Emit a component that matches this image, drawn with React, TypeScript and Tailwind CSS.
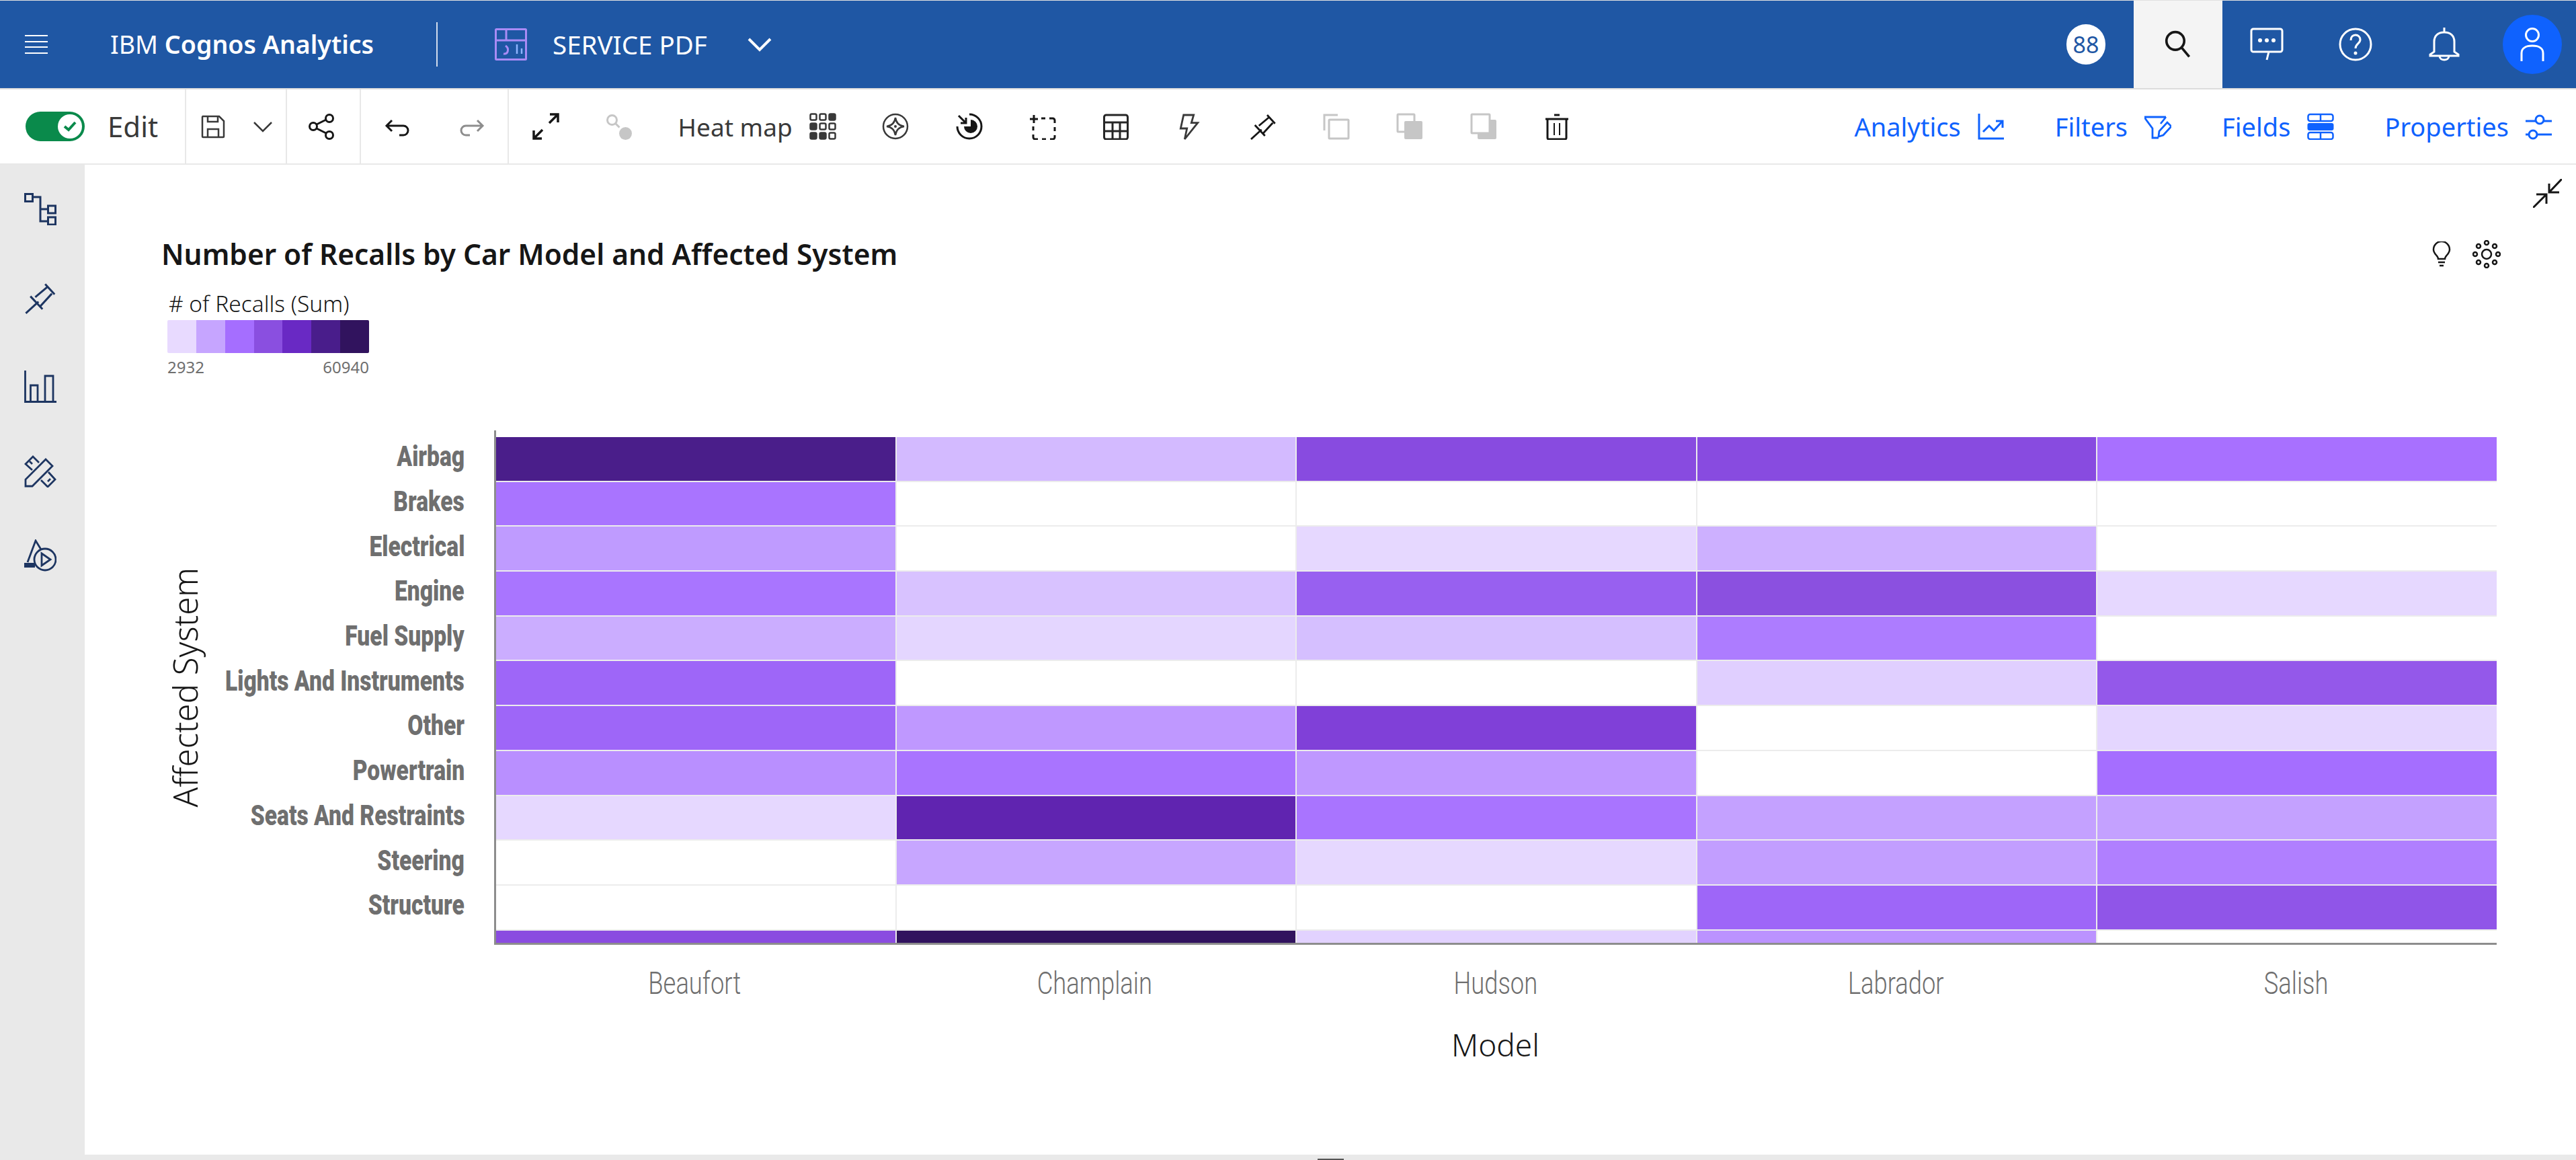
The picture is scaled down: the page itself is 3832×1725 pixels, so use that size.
import React from 'react';

const SANS = "font-['Noto_Sans','Liberation_Sans',sans-serif]";

// value rows, top to bottom: Beaufort, Champlain, Hudson, Labrador, Salish
const rows: { label: string; cells: string[] }[] = [
  { label: 'Airbag', cells: ['#4a1e8a', '#d3baff', '#884be0', '#884be0', '#a870ff'] },
  { label: 'Brakes', cells: ['#a974ff', '#ffffff', '#ffffff', '#ffffff', '#ffffff'] },
  { label: 'Electrical', cells: ['#bf9bff', '#ffffff', '#e6d8ff', '#cdb0ff', '#ffffff'] },
  { label: 'Engine', cells: ['#a975ff', '#d8c2ff', '#9860f0', '#8b50e0', '#e6d8ff'] },
  { label: 'Fuel Supply', cells: ['#cbadff', '#e4d6ff', '#d5bfff', '#ad7cff', '#ffffff'] },
  { label: 'Lights And Instruments', cells: ['#9e66f8', '#ffffff', '#ffffff', '#e0cfff', '#9458ea'] },
  { label: 'Other', cells: ['#9e66f8', '#bf98ff', '#8040d8', '#ffffff', '#e4d6ff'] },
  { label: 'Powertrain', cells: ['#b98fff', '#a974ff', '#bf98ff', '#ffffff', '#a56eff'] },
  { label: 'Seats And Restraints', cells: ['#e6d8ff', '#6024b0', '#a974ff', '#c4a1ff', '#c4a1ff'] },
  { label: 'Steering', cells: ['#ffffff', '#c7a6ff', '#e6d8ff', '#c29eff', '#b07fff'] },
  { label: 'Structure', cells: ['#ffffff', '#ffffff', '#ffffff', '#9e66f8', '#9055e8'] },
  { label: '', cells: ['#8a4ce0', '#31135e', '#e2d2ff', '#bb92ff', '#ffffff'] },
];

const models = ['Beaufort', 'Champlain', 'Hudson', 'Labrador', 'Salish'];
const legend = ['#e8daff', '#c6a5ff', '#a56eff', '#8a4fe0', '#6929c4', '#491d8b', '#31135e'];

const Icon: React.FC<{ size?: number; box?: number; sw?: number; className?: string; children: React.ReactNode }> = ({
  size = 40,
  box = 40,
  sw = 3,
  className = '',
  children,
}) => (
  <svg
    width={size}
    height={size}
    viewBox={`0 0 ${box} ${box}`}
    fill="none"
    stroke="currentColor"
    strokeWidth={sw}
    className={`shrink-0 ${className}`}
  >
    {children}
  </svg>
);

const PinPaths = () => (
  <>
    <path d="M2 39L17.7 24.7" />
    <path d="M26 3L37.7 15.7" />
    <path d="M7.7 18L22.7 34" />
    <path d="M13.7 19L29.3 6" />
    <path d="M34.3 14.7L19.3 31" />
  </>
);

const Hamburger = () => (
  <svg width="34" height="30" viewBox="0 0 34 30" fill="none" stroke="#fff" strokeWidth="2" className="shrink-0">
    <path d="M0 2h34M0 11h34M0 19h34M0 28h34" />
  </svg>
);

const ToolButton: React.FC<{ children: React.ReactNode }> = ({ children }) => (
  <div className="flex h-full w-[109.3px] shrink-0 items-center justify-center">{children}</div>
);

const TopButton: React.FC<{ active?: boolean; children: React.ReactNode }> = ({ active, children }) => (
  <div className={`flex h-full w-[132px] shrink-0 items-center justify-center ${active ? 'bg-[#f4f4f4] text-[#161616]' : 'text-white'}`}>
    {children}
  </div>
);

const TopBar = () => (
  <header className="flex h-[133px] shrink-0 items-center border-t border-b-2 border-t-[#e0e0e0] border-b-[#dcdcdc] bg-[#1f57a4] pl-[37px] text-white">
    <Hamburger />
    <div className="ml-[93px] w-[391px] text-[37.5px] leading-none whitespace-nowrap">
      IBM <span className="font-semibold">Cognos Analytics</span>
    </div>
    <div className="ml-[94px] h-[66px] w-[2px] bg-white/80" />
    <svg width="48" height="48" viewBox="0 0 48 48" fill="none" stroke="#a98bf5" strokeWidth="3" className="ml-[85px] shrink-0">
      <rect x="1.5" y="1.5" width="45" height="45" rx="1" />
      <path d="M1.5 18h45M17 1.5V18" />
      <path d="M16 26c6 4 4 13-3 12" strokeWidth="3" />
      <path d="M33 24v14M40 30v8" stroke="#8fb4ff" strokeWidth="2.5" />
    </svg>
    <div className="ml-[38px] w-[236px] text-[38.5px] leading-none whitespace-nowrap">SERVICE PDF</div>
    <svg width="36" height="22" viewBox="0 0 36 22" fill="none" stroke="#fff" strokeWidth="4" className="ml-[54px] shrink-0">
      <path d="M2 3l16 16L34 3" />
    </svg>
    <div className="ml-auto flex h-full items-center">
      <div className="flex h-[60px] w-[58px] items-center justify-center rounded-full bg-white text-[34px] leading-none text-[#1f57a4]">88</div>
      <div className="ml-[42px] flex h-full">
        <TopButton active>
          <Icon size={46} box={40}>
            <circle cx="16.5" cy="15.5" r="11.5" strokeWidth="3.2" />
            <path d="M24.5 24l10 12" strokeWidth="3.2" />
          </Icon>
        </TopButton>
        <TopButton>
          <Icon size={50} box={50} sw={3}>
            <rect x="2" y="2" width="46" height="34" rx="3" />
            <path d="M28 36l-3 12" />
            <circle cx="15" cy="19" r="3" fill="currentColor" stroke="none" />
            <circle cx="25" cy="19" r="3" fill="currentColor" stroke="none" />
            <circle cx="35" cy="19" r="3" fill="currentColor" stroke="none" />
          </Icon>
        </TopButton>
        <TopButton>
          <Icon size={50} box={50} sw={3}>
            <circle cx="25" cy="25" r="23" />
            <path d="M18 19c0-5 3-8 7-8s7 3 7 7c0 6-7 6-7 13" />
            <circle cx="25" cy="38" r="2.5" fill="currentColor" stroke="none" />
          </Icon>
        </TopButton>
        <TopButton>
          <Icon size={50} box={50} sw={3}>
            <path d="M25 0v7M10 36V21c0-9 6-14 15-14s15 5 15 14v15l6 4v2H4v-2z" />
            <path d="M18 42c0 8 14 8 14 0" />
          </Icon>
        </TopButton>
        <div className="flex h-full w-[130px] shrink-0 items-center justify-center">
          <div className="flex h-[88px] w-[88px] items-center justify-center rounded-full bg-[#0f62fe]">
            <svg width="36" height="50" viewBox="0 0 36 50" fill="none" stroke="#fff" strokeWidth="3">
              <circle cx="18" cy="11" r="9.5" />
              <path d="M2 50V38c0-7 6-11 16-11s16 4 16 11v12" />
            </svg>
          </div>
        </div>
      </div>
    </div>
  </header>
);

const Toolbar = () => (
  <div className="flex h-[112px] shrink-0 items-stretch border-b-2 border-[#e8e8e8] bg-white text-[#393939]">
    {/* edit toggle */}
    <div className="flex w-[277px] shrink-0 items-center border-r-2 border-[#e8e8e8] pl-[38px]">
      <div className="flex h-[44px] w-[88px] items-center justify-end rounded-full bg-[#0a8a4b] pr-[4px]">
        <div className="flex h-[36px] w-[36px] items-center justify-center rounded-full bg-white">
          <svg width="20" height="16" viewBox="0 0 20 16" fill="none" stroke="#0a8a4b" strokeWidth="4">
            <path d="M2 8l6 5L18 2" />
          </svg>
        </div>
      </div>
      <span className="ml-[34px] text-[42px] leading-none">Edit</span>
    </div>
    {/* save */}
    <div className="flex w-[150px] shrink-0 items-center border-r-2 border-[#e8e8e8] pl-[20px]">
      <Icon sw={2.5}>
        <path d="M4 5h25l7 7v23a1 1 0 0 1-1 1H5a1 1 0 0 1-1-1V6a1 1 0 0 1 1-1z" />
        <path d="M12 5v8h15V5M12 36V24h16v12" />
      </Icon>
      <Icon sw={2.5} className="ml-[34px]">
        <path d="M7 14l13 13 13-13" />
      </Icon>
    </div>
    {/* share */}
    <div className="flex w-[110px] shrink-0 items-center justify-center border-r-2 border-[#e8e8e8] pr-[6px] text-[#161616]">
      <Icon sw={3}>
        <circle cx="32" cy="8" r="5.5" />
        <circle cx="8" cy="20" r="5.5" />
        <circle cx="32" cy="33" r="5.5" />
        <path d="M13 17l14-7M13 23l14 7" />
      </Icon>
    </div>
    {/* undo, redo */}
    <div className="flex w-[220px] shrink-0 items-center border-r-2 border-[#e8e8e8]">
      <ToolButton>
        <Icon className="text-[#161616]">
          <path d="M11 11l-8 8 8 8M3 19h25a7 7 0 0 1 0 14h-6" />
        </Icon>
      </ToolButton>
      <ToolButton>
        <Icon className="text-[#8d8d8d]">
          <path d="M29 11l8 8-8 8M37 19H12a7 7 0 0 0 0 14h6" />
        </Icon>
      </ToolButton>
    </div>
    {/* chart tools */}
    <div className="flex min-w-0 flex-1 items-center">
      <ToolButton>
        <Icon sw={3.5} className="text-[#161616]">
          <path d="M2 38l13-13M2 26v12h12M25 15L38 2M26 2h12v12" />
        </Icon>
      </ToolButton>
      <ToolButton>
        <Icon className="text-[#c6c6c6]">
          <circle cx="9.5" cy="10.5" r="7" />
          <path d="M14.5 15.5l6 6" />
          <circle cx="29.5" cy="30.5" r="9.5" fill="currentColor" stroke="none" />
        </Icon>
      </ToolButton>
      <span className="ml-[33px] w-[167px] text-[37px] leading-none whitespace-nowrap">Heat map</span>
      <svg width="40" height="40" viewBox="0 0 40 40" className="ml-[28px] shrink-0 text-[#393939]" stroke="currentColor" strokeWidth="2.5" fill="none">
        <rect x="1.5" y="1.5" width="9" height="9" rx="2" />
        <rect x="15.5" y="1.5" width="9" height="9" rx="2" />
        <rect x="29.5" y="1.5" width="9" height="9" rx="2" fill="currentColor" />
        <rect x="1.5" y="15.5" width="9" height="9" rx="2" fill="currentColor" />
        <rect x="15.5" y="15.5" width="9" height="9" rx="2" />
        <rect x="29.5" y="15.5" width="9" height="9" rx="2" />
        <rect x="1.5" y="29.5" width="9" height="9" rx="2" fill="currentColor" />
        <rect x="15.5" y="29.5" width="9" height="9" rx="2" fill="currentColor" />
        <rect x="29.5" y="29.5" width="9" height="9" rx="2" />
      </svg>
      <div className="ml-[34px] flex h-full items-center">
        <ToolButton>
          <Icon sw={2.5}>
            <circle cx="20" cy="20" r="18" />
            <path d="M20 7c1 7 5 12 13 13-8 1-12 6-13 13-1-7-5-12-13-13 8-1 12-6 13-13z" />
            <circle cx="20" cy="20" r="2" fill="currentColor" stroke="none" />
          </Icon>
        </ToolButton>
        <ToolButton>
          <Icon sw={3} className="text-[#161616]">
            <path d="M20 2a18 18 0 1 1-18 18" />
            <path d="M22 10a10 10 0 1 1-10 10h10z" fill="currentColor" stroke="none" />
            <path d="M4 4l11 11M15 7v8H7" />
          </Icon>
        </ToolButton>
        <ToolButton>
          <Icon sw={3} className="text-[#161616]">
            <path d="M7 3v12M1 9h12" />
            <path d="M18 8h6M30 8h5a3 3 0 0 1 3 3v4M38 21v6M38 33v3a3 3 0 0 1-3 3h-4M25 39h-6M13 39H9a3 3 0 0 1-3-3v-4M6 26v-6" />
          </Icon>
        </ToolButton>
        <ToolButton>
          <Icon sw={3} className="text-[#262626]">
            <rect x="2.5" y="3" width="35" height="36" rx="3" />
            <path d="M2.5 14h35M2.5 27h35M15 14v25M26 14v25" />
          </Icon>
        </ToolButton>
        <ToolButton>
          <Icon sw={2.8}>
            <path d="M11.7 3h15l-3.4 11.7h9.4L13.3 39l3.4-16H7.3z" />
          </Icon>
        </ToolButton>
        <ToolButton>
          <Icon sw={2.8} className="text-[#161616]">
            <PinPaths />
          </Icon>
        </ToolButton>
        <ToolButton>
          <Icon sw={3} className="text-[#c6c6c6]">
            <path d="M2 26V3h20" />
            <rect x="9" y="10" width="29" height="28" rx="1" />
          </Icon>
        </ToolButton>
        <ToolButton>
          <Icon sw={3} className="text-[#c6c6c6]">
            <rect x="2" y="2" width="25" height="26" rx="1" />
            <rect x="12" y="12" width="27" height="27" rx="2" fill="currentColor" stroke="none" />
          </Icon>
        </ToolButton>
        <ToolButton>
          <Icon sw={3} className="text-[#c6c6c6]">
            <rect x="11" y="10" width="28" height="29" rx="2" fill="currentColor" stroke="none" />
            <rect x="2" y="2" width="27" height="28" rx="1" fill="#fff" />
          </Icon>
        </ToolButton>
        <ToolButton>
          <Icon sw={3} className="text-[#161616]">
            <path d="M16 3h8M3 9h34" />
            <path d="M6 9v28a2 2 0 0 0 2 2h24a2 2 0 0 0 2-2V9" />
            <path d="M16 15v18M24 15v18" strokeWidth="2" />
          </Icon>
        </ToolButton>
      </div>
      {/* side panels */}
      <div className="ml-auto flex items-center gap-[75px] pr-[35px] text-[38px] leading-none text-[#0f62fe]">
        <div className="flex items-center gap-[25px]">
          <span>Analytics</span>
          <Icon sw={3}>
            <path d="M2 1v37h37" />
            <path d="M8 28l9-9 7 7 12-13" />
            <path d="M27 12h10v10" />
          </Icon>
        </div>
        <div className="flex items-center gap-[25px]">
          <span>Filters</span>
          <Icon sw={2.8}>
            <path d="M32 6H1v2l11 15v14h9" />
            <path d="M24 16l8-10" />
            <path d="M21 35l1-8 12-13 6 6-12 13z" />
          </Icon>
        </div>
        <div className="flex items-center gap-[25px]">
          <span>Fields</span>
          <Icon sw={2.5}>
            <rect x="1.5" y="2" width="37" height="10" rx="3" />
            <path d="M20 2v10" />
            <rect x="0.5" y="15" width="39" height="11" rx="3" fill="currentColor" stroke="none" />
            <rect x="1.5" y="29" width="37" height="10" rx="3" />
            <path d="M20 29v10" />
          </Icon>
        </div>
        <div className="flex items-center gap-[25px]">
          <span>Properties</span>
          <Icon sw={3}>
            <path d="M0 12h39M0 32h39" />
            <circle cx="21" cy="10" r="6" fill="#fff" />
            <circle cx="11" cy="32" r="6" fill="#fff" />
          </Icon>
        </div>
      </div>
    </div>
  </div>
);

const Sidebar = () => (
  <aside className="flex w-[126px] shrink-0 flex-col items-center bg-[#e9e9e9] pt-[42px] pr-[6px] text-[#1d3561]">
    <Icon size={48} box={48} sw={3}>
      <rect x="1.5" y="1.5" width="11" height="11" />
      <rect x="35.5" y="19" width="11" height="11" />
      <rect x="35.5" y="36" width="11" height="11" />
      <path d="M12.5 6H24v36h11.5M24 24h11.5" />
    </Icon>
    <Icon size={48} box={40} sw={2.5} className="mt-[84px]">
      <PinPaths />
    </Icon>
    <Icon size={48} box={48} sw={2.8} className="mt-[84px]">
      <path d="M1.5 0v46.5H48" />
      <path d="M9.5 46V22h10.5v24M31 46V8h12v38" />
    </Icon>
    <Icon size={48} box={48} sw={2.8} className="mt-[78px]">
      <path d="M2 46V36L32 6l10 10-30 30z" />
      <path d="M12 22L2 13 13 2l9 9M36 25l10 11-11 11-10-10" />
      <path d="M8 9l4 4M35 39l4-4" />
    </Icon>
    <Icon size={48} box={48} sw={2.8} className="mt-[77px]">
      <path d="M5 34L17 2l8 13" />
      <rect x="0" y="35" width="16" height="7" fill="currentColor" stroke="none" />
      <circle cx="31" cy="30" r="16" />
      <path d="M26 21l13 9-13 9z" />
    </Icon>
  </aside>
);

const Chart = () => (
  <div className="flex min-w-0 flex-1 flex-col pl-[114px] text-[#161616]">
    <div className="flex justify-end pt-[21px] pr-[21px]">
      <svg width="43" height="43" viewBox="0 0 43 43" fill="none" stroke="#161616" strokeWidth="3" className="shrink-0">
        <path d="M43 0L24 20M24 7v13h15M0 43l20-20M5 23h15v14" />
      </svg>
    </div>
    <div className="mt-[40px] flex h-[58px] items-center justify-between pr-[112px]">
      <h1 className="text-[42.4px] leading-none font-semibold whitespace-nowrap">Number of Recalls by Car Model and Affected System</h1>
      <div className="flex items-center gap-[32px]">
        <svg width="28" height="38" viewBox="0 0 28 38" fill="none" stroke="#161616" strokeWidth="2.5">
          <path d="M9 26c0-5-7-7-7-14a12 12 0 0 1 24 0c0 7-7 9-7 14z" />
          <path d="M9 31h10M11 36h6" />
        </svg>
        <svg width="42" height="42" viewBox="0 0 42 42" fill="none" stroke="#161616" strokeWidth="2.5">
          <circle cx="21" cy="21" r="7" />
          <circle cx="21" cy="4" r="3" />
          <circle cx="33" cy="9" r="3" />
          <circle cx="38" cy="21" r="3" />
          <circle cx="33" cy="33" r="3" />
          <circle cx="21" cy="38" r="3" />
          <circle cx="9" cy="33" r="3" />
          <circle cx="4" cy="21" r="3" />
          <circle cx="9" cy="9" r="3" />
        </svg>
      </div>
    </div>
    {/* legend */}
    <div className="mt-[26px] ml-[9px] flex w-[300px] flex-col">
      <div className="pl-[2px] text-[33.5px] leading-[36px] font-light whitespace-nowrap">
        # of Recalls (Sum)
      </div>
      <div className="mt-[7px] flex h-[49px] overflow-hidden rounded-[2px]">
        {legend.map((c) => (
          <div key={c} className="flex-1" style={{ backgroundColor: c }} />
        ))}
      </div>
      <div className="mt-[8px] flex justify-between text-[24px] leading-[26px] text-[#6f6f6f]">
        <span>2932</span>
        <span>60940</span>
      </div>
    </div>
    {/* heat map */}
    <div className="mt-[81px] flex">
      <div className="flex w-[70px] shrink-0 items-center justify-center">
        <span className="rotate-180 text-[49px] leading-none font-light whitespace-nowrap [writing-mode:vertical-rl]">Affected System</span>
      </div>
      <div className="flex w-[381px] shrink-0 flex-col items-end pt-[6px]">
        {rows.slice(0, 11).map((r) => (
          <div key={r.label} className="flex h-[66.7px] items-center">
            <span className="origin-right scale-x-[0.8] font-['Roboto',sans-serif] text-[42px] leading-none font-black whitespace-nowrap text-[#6f6f6f]">
              {r.label}
            </span>
          </div>
        ))}
      </div>
      <div className="ml-[44px] w-[2979px] shrink-0 border-b-[3px] border-l-[3px] border-[#8d8d8d] pt-[10px]">
        <div className="grid grid-cols-5 grid-rows-[repeat(11,64.7px)_18px] gap-[2px] bg-[#ececec]">
          {rows.map((r, i) =>
            r.cells.map((c, j) => <div key={`${i}-${j}`} style={{ backgroundColor: c }} />),
          )}
        </div>
      </div>
    </div>
    <div className="mt-[35px] ml-[495px] grid w-[2979px] grid-cols-5">
      {models.map((m) => (
        <div key={m} className="flex h-[44px] items-center justify-center">
          <span className="scale-x-[0.79] font-['Roboto',sans-serif] text-[46px] leading-none font-light text-[#6f6f6f]">{m}</span>
        </div>
      ))}
    </div>
    <div className="mt-[47px] ml-[495px] w-[2979px] text-center text-[46px] leading-[44px] font-light">Model</div>
  </div>
);

export default function App() {
  return (
    <div className={`flex h-[1725px] w-[3832px] flex-col overflow-hidden bg-white ${SANS}`}>
      <TopBar />
      <Toolbar />
      <div className="flex min-h-0 flex-1">
        <Sidebar />
        <div className="flex min-w-0 flex-1 flex-col">
          <div className="flex min-h-0 flex-1">
            <Chart />
          </div>
          <div className="flex h-[8px] shrink-0 items-end justify-start bg-[#e9e9e9] pl-[1834px]">
            <div className="h-[2px] w-[39px] bg-[#555555]" />
          </div>
        </div>
      </div>
    </div>
  );
}
